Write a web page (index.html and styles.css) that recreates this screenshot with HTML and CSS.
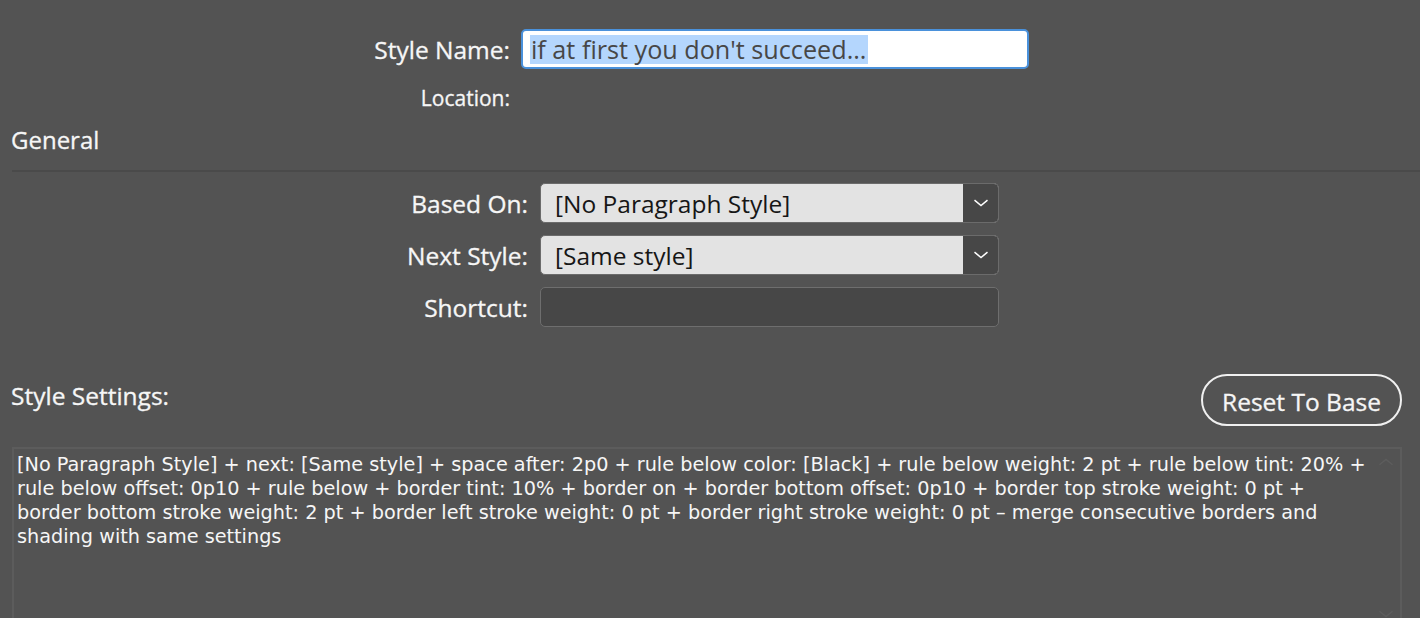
FILE: index.html
```html
<!DOCTYPE html>
<html>
<head>
<meta charset="utf-8">
<link rel="stylesheet" href="styles.css">
</head>
<body>
<div class="dialog">
  <div class="row row-name">
    <label class="lbl lbl-top">Style Name:</label>
    <div class="name-input"><span class="sel">if at first you don't succeed...</span></div>
  </div>
  <div class="row row-loc">
    <label class="lbl lbl-top small">Location:</label>
  </div>
  <div class="heading">General</div>
  <div class="sep"></div>
  <div class="general">
    <div class="row grow">
      <label class="lbl lbl-gen">Based On:</label>
      <div class="select">
        <span class="select-text">[No Paragraph Style]</span>
        <span class="select-btn"><svg width="16" height="8" viewBox="0 0 16 8"><path d="M1.5 1.2 L8 6.5 L14.5 1.2" fill="none" stroke="#ffffff" stroke-width="1.5"/></svg></span>
      </div>
    </div>
    <div class="row grow">
      <label class="lbl lbl-gen">Next Style:</label>
      <div class="select">
        <span class="select-text">[Same style]</span>
        <span class="select-btn"><svg width="16" height="8" viewBox="0 0 16 8"><path d="M1.5 1.2 L8 6.5 L14.5 1.2" fill="none" stroke="#ffffff" stroke-width="1.5"/></svg></span>
      </div>
    </div>
    <div class="row grow">
      <label class="lbl lbl-gen">Shortcut:</label>
      <div class="shortcut"></div>
    </div>
  </div>
  <div class="settings-head">
    <div class="heading settings-title">Style Settings:</div>
    <button class="reset">Reset To Base</button>
  </div>
  <div class="settings-box">
    <p class="settings-text">[No Paragraph Style] + next: [Same style] + space after: 2p0 + rule below color: [Black] + rule below weight: 2 pt + rule below tint: 20% +<br>rule below offset: 0p10 + rule below + border tint: 10% + border on + border bottom offset: 0p10 + border top stroke weight: 0 pt +<br>border bottom stroke weight: 2 pt + border left stroke weight: 0 pt + border right stroke weight: 0 pt – merge consecutive borders and<br>shading with same settings</p>
    <svg class="scroll-up" width="16" height="8" viewBox="0 0 16 8"><path d="M1.5 6.8 L8 1.5 L14.5 6.8" fill="none" stroke="#5d5d5d" stroke-width="1.4"/></svg>
    <svg class="scroll-down" width="16" height="8" viewBox="0 0 16 8"><path d="M1.5 1.2 L8 6.5 L14.5 1.2" fill="none" stroke="#5d5d5d" stroke-width="1.4"/></svg>
  </div>
</div>
</body>
</html>
```
FILE: styles.css
```css
html, body {
  margin: 0;
  padding: 0;
  background: #535353;
  overflow: hidden;
}
body {
  width: 1420px;
  height: 618px;
  font-family: "Open Sans", "Noto Sans", sans-serif;
  color: #f2f2f2;
}
.dialog {
  padding-top: 29px;
}
.row {
  display: flex;
  align-items: center;
}
.lbl {
  text-align: right;
  font-size: 24.5px;
  color: #f6f6f6;
  white-space: nowrap;
  -webkit-text-stroke: 0.3px #f6f6f6;
}
.lbl-top {
  width: 510px;
  margin-right: 11px;
}
.small {
  font-size: 21px;
}
.row-name {
  height: 40px;
}
.name-input {
  box-sizing: border-box;
  width: 508px;
  height: 40px;
  background: #ffffff;
  border: 2px solid #4a91db;
  border-radius: 5px;
  padding: 0 0 0 7px;
  display: flex;
  align-items: center;
}
.sel {
  background: #b4d6fd;
  color: #474747;
  font-size: 25.2px;
  line-height: 29px;
  padding: 0 2px 0 1px;
  white-space: nowrap;
}
.row-loc {
  height: 24px;
  margin-top: 17px;
}
.heading {
  font-size: 24px;
  line-height: 30px;
  padding-left: 11px;
  color: #f6f6f6;
  -webkit-text-stroke: 0.3px #f6f6f6;
}
.dialog > .heading {
  margin-top: 15px;
}
.sep {
  margin: 15px 0 0 12px;
  height: 2px;
  background: #4a4a4a;
}
.general {
  margin-top: 11px;
  display: flex;
  flex-direction: column;
  gap: 12px;
}
.grow {
  height: 40px;
}
.lbl-gen {
  width: 528px;
  margin-right: 12px;
}
.select {
  box-sizing: border-box;
  width: 459px;
  height: 40px;
  display: flex;
  border: 1px solid #6b6b6b;
  border-radius: 5px;
  overflow: hidden;
  background: #e3e3e3;
}
.select-text {
  flex: 1;
  color: #161616;
  font-size: 24.5px;
  padding-left: 14px;
  display: flex;
  align-items: center;
  white-space: nowrap;
}
.select-btn {
  width: 35px;
  background: #474747;
  display: flex;
  align-items: center;
  justify-content: center;
}
.shortcut {
  box-sizing: border-box;
  width: 459px;
  height: 40px;
  background: #474747;
  border: 1px solid #6e6e6e;
  border-radius: 5px;
}
.settings-head {
  margin-top: 47px;
  display: flex;
  align-items: flex-start;
  justify-content: space-between;
  padding-right: 18px;
}
.settings-title {
  font-size: 24.5px;
  margin-top: 7px;
}
.reset {
  box-sizing: border-box;
  width: 201px;
  height: 52px;
  border: 2px solid #f0f0f0;
  border-radius: 26px;
  background: transparent;
  color: #f6f6f6;
  font-family: "Open Sans", "Noto Sans", sans-serif;
  font-size: 24.5px;
  line-height: 30px;
  padding: 3px 0 0 0;
  -webkit-text-stroke: 0.3px #f6f6f6;
}
.settings-box {
  position: relative;
  box-sizing: border-box;
  margin: 21px 18px 0 12px;
  height: 200px;
  border: 2px solid #5c5c5c;
  padding: 4px 40px 0 3px;
}
.settings-text {
  margin: 0;
  font-family: "DejaVu Sans", sans-serif;
  font-size: 19.25px;
  line-height: 24px;
  color: #f6f6f6;
  white-space: nowrap;
}
.scroll-up {
  position: absolute;
  right: 6px;
  top: 9px;
}
.scroll-down {
  position: absolute;
  right: 6px;
  top: 161px;
}
```
